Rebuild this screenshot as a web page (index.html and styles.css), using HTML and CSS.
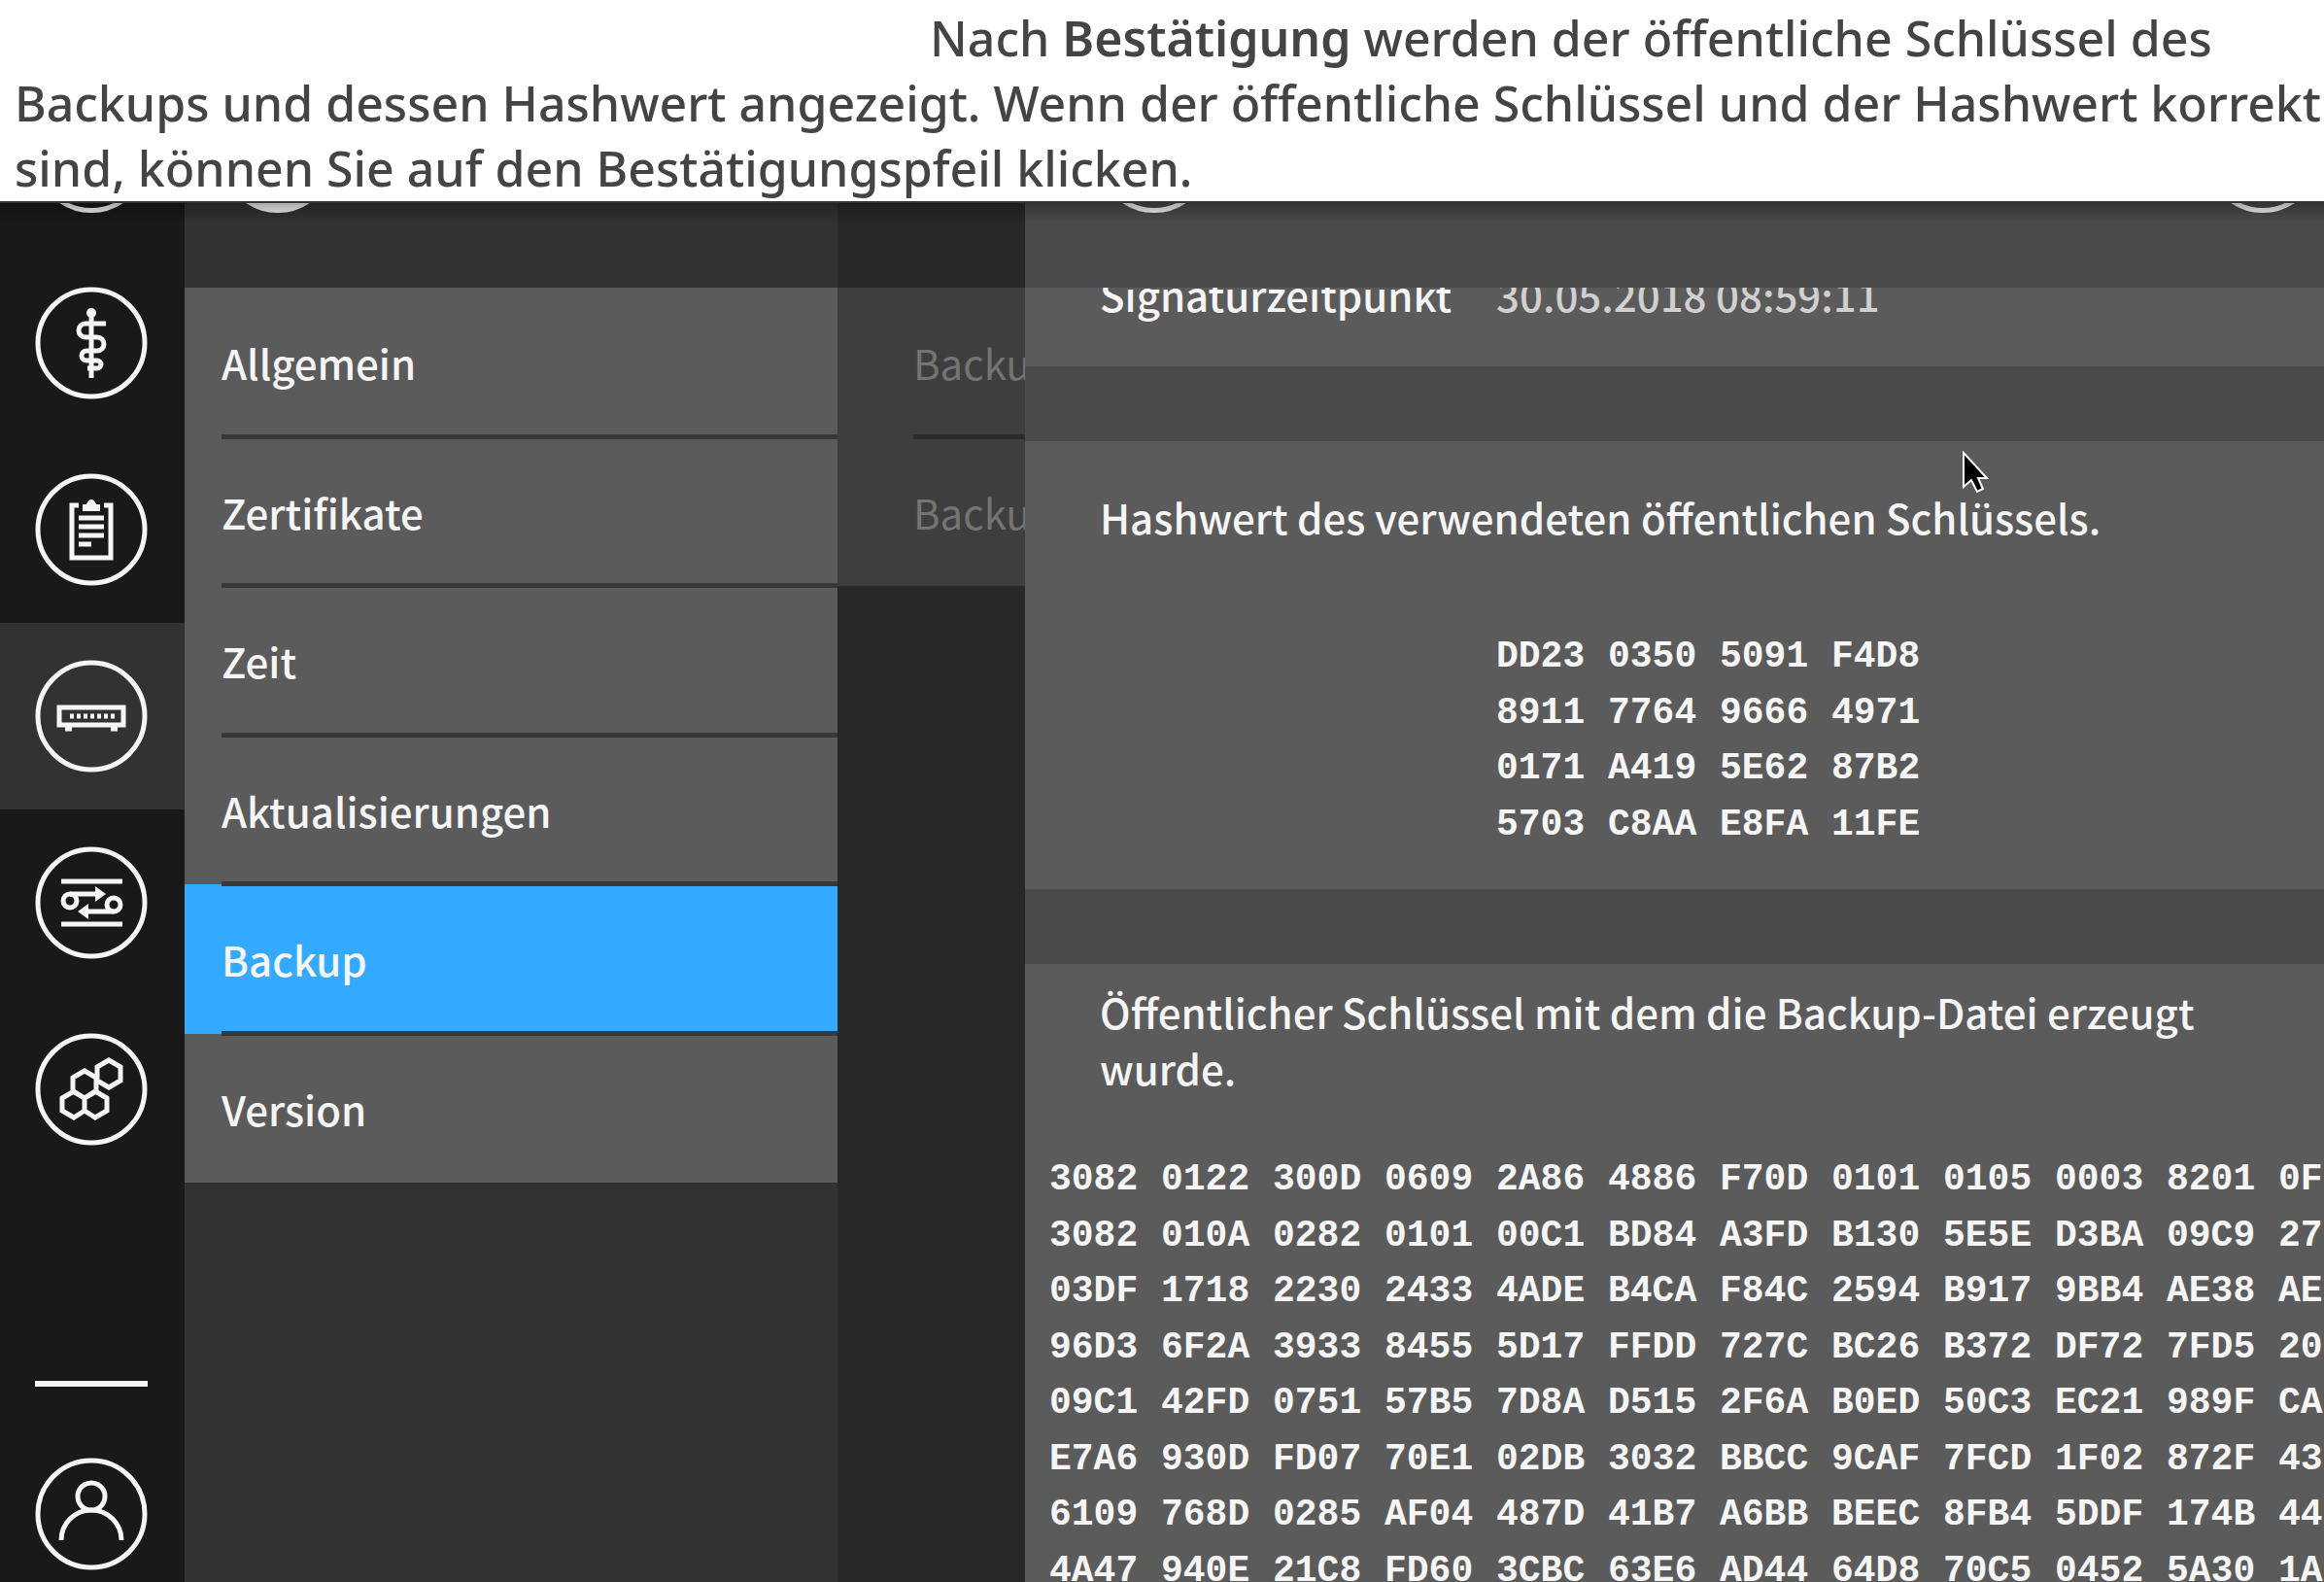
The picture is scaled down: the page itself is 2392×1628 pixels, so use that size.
FILE: index.html
```html
<!DOCTYPE html>
<html lang="de">
<head>
<meta charset="utf-8">
<meta name="viewport" content="width=device-width, initial-scale=1">
<title>Backup</title>
<link rel="stylesheet" href="styles.css">
</head>
<body>
<p class="intro">Nach <strong>Bestätigung</strong> werden der öffentliche Schlüssel des Backups und dessen Hashwert angezeigt. Wenn der öffentliche Schlüssel und der Hashwert korrekt sind, können Sie auf den Bestätigungspfeil klicken.</p>
<div class="app">
  <div class="columns">
    <nav class="rail" aria-label="Hauptmenü">
      <a class="rail-item" href="#start" aria-label="Start"><span class="ring"></span></a>
      <a class="rail-item" href="#praxis" aria-label="Praxis">
        <svg class="icon" viewBox="0 0 116 116"><circle cx="58" cy="58" r="55"/><circle class="solid" cx="58" cy="27" r="5"/><path d="M58 26V94"/><path d="M73 38H52a7 7 0 0 0 0 14H64a7 7 0 0 1 0 14H53a5 5 0 0 0 0 10H64a4 4 0 0 1 0 8H54"/></svg>
      </a>
      <a class="rail-item" href="#protokoll" aria-label="Protokoll">
        <svg class="icon" viewBox="0 0 116 116"><circle cx="58" cy="58" r="55"/><path d="M45 33H38V87H78V33H71"/><path class="solid" d="M49 39V32H53Q55 27 58 27T63 32H67V39Z"/><path d="M45 46H71M45 55H71M45 64H71M45 73H58"/></svg>
      </a>
      <a class="rail-item active" href="#konnektor" aria-label="Konnektor" aria-current="page">
        <svg class="icon" viewBox="0 0 116 116"><circle cx="58" cy="58" r="55"/><path d="M25 49H91V67H25Z"/><path class="dots" d="M36 58H82"/><path d="M31 71H38M78 71H85"/></svg>
      </a>
      <a class="rail-item" href="#netzwerk" aria-label="Netzwerk">
        <svg class="icon" viewBox="0 0 116 116"><circle cx="58" cy="58" r="55"/><path d="M27 36H90M27 80H90"/><circle cx="36" cy="56" r="7"/><circle cx="81" cy="60" r="7"/><path d="M36 49H64M81 67H54"/><path class="solid" d="M62 41L73 49L62 57ZM55 59L44 67L55 75Z"/></svg>
      </a>
      <a class="rail-item" href="#module" aria-label="Module">
        <svg class="icon" viewBox="0 0 116 116"><circle cx="58" cy="58" r="55"/><path d="M76 28L88 35V49L76 56L64 49V35ZM51 39L63 46V60L51 67L39 60V46ZM40 60L51 67V80L40 87L28 80V67ZM62 60L74 67V80L62 87L51 80V67Z"/></svg>
      </a>
      <hr class="rail-rule">
      <a class="rail-item" href="#benutzer" aria-label="Benutzer">
        <svg class="icon" viewBox="0 0 116 116"><circle cx="58" cy="58" r="55"/><circle cx="58" cy="40" r="14"/><path d="M27 85A31 31 0 0 1 89 85"/></svg>
      </a>
    </nav>
    <section class="menu">
      <header class="bar"><span class="ring filled"></span></header>
      <ul class="list">
        <li><a href="#allgemein">Allgemein</a></li>
        <li><a href="#zertifikate">Zertifikate</a></li>
        <li><a href="#zeit">Zeit</a></li>
        <li><a href="#aktualisierungen">Aktualisierungen</a></li>
        <li class="selected"><a href="#backup">Backup</a></li>
        <li><a href="#version">Version</a></li>
      </ul>
    </section>
    <section class="menu submenu">
      <header class="bar"></header>
      <ul class="list">
        <li><a href="#export">Backu</a></li>
        <li><a href="#import">Backu</a></li>
      </ul>
    </section>
    <main class="detail">
      <header class="bar"><button class="ring" aria-label="Zurück"></button><button class="ring" aria-label="Bestätigen"></button></header>
      <dl class="card signature"><dt>Signaturzeitpunkt</dt><dd>30.05.2018 08:59:11</dd></dl>
      <section class="card hash">
        <h2>Hashwert des verwendeten öffentlichen Schlüssels.</h2>
        <div class="hex">
          <div><span>DD23</span><span>0350</span><span>5091</span><span>F4D8</span></div>
          <div><span>8911</span><span>7764</span><span>9666</span><span>4971</span></div>
          <div><span>0171</span><span>A419</span><span>5E62</span><span>87B2</span></div>
          <div><span>5703</span><span>C8AA</span><span>E8FA</span><span>11FE</span></div>
        </div>
        <svg class="cursor" viewBox="0 0 28 44"><path d="M2 2V37L10 30L16 42L22 39L17 28H26Z"/></svg>
      </section>
      <section class="card key">
        <h2>Öffentlicher Schlüssel mit dem die Backup-Datei erzeugt wurde.</h2>
        <div class="hex">
          <div><span>3082</span><span>0122</span><span>300D</span><span>0609</span><span>2A86</span><span>4886</span><span>F70D</span><span>0101</span><span>0105</span><span>0003</span><span>8201</span><span>0F</span></div>
          <div><span>3082</span><span>010A</span><span>0282</span><span>0101</span><span>00C1</span><span>BD84</span><span>A3FD</span><span>B130</span><span>5E5E</span><span>D3BA</span><span>09C9</span><span>27</span></div>
          <div><span>03DF</span><span>1718</span><span>2230</span><span>2433</span><span>4ADE</span><span>B4CA</span><span>F84C</span><span>2594</span><span>B917</span><span>9BB4</span><span>AE38</span><span>AE</span></div>
          <div><span>96D3</span><span>6F2A</span><span>3933</span><span>8455</span><span>5D17</span><span>FFDD</span><span>727C</span><span>BC26</span><span>B372</span><span>DF72</span><span>7FD5</span><span>20</span></div>
          <div><span>09C1</span><span>42FD</span><span>0751</span><span>57B5</span><span>7D8A</span><span>D515</span><span>2F6A</span><span>B0ED</span><span>50C3</span><span>EC21</span><span>989F</span><span>CA</span></div>
          <div><span>E7A6</span><span>930D</span><span>FD07</span><span>70E1</span><span>02DB</span><span>3032</span><span>BBCC</span><span>9CAF</span><span>7FCD</span><span>1F02</span><span>872F</span><span>43</span></div>
          <div><span>6109</span><span>768D</span><span>0285</span><span>AF04</span><span>487D</span><span>41B7</span><span>A6BB</span><span>BEEC</span><span>8FB4</span><span>5DDF</span><span>174B</span><span>44</span></div>
          <div><span>4A47</span><span>940E</span><span>21C8</span><span>FD60</span><span>3CBC</span><span>63E6</span><span>AD44</span><span>64D8</span><span>70C5</span><span>0452</span><span>5A30</span><span>1A</span></div>
        </div>
      </section>
    </main>
  </div>
</div>
</body>
</html>
```
FILE: styles.css
```css
* { box-sizing: border-box; margin: 0; padding: 0; }

body {
  display: flex;
  flex-direction: column;
  height: 100vh;
  overflow: hidden;
  background: #fff;
  font-family: "Noto Sans CJK SC", "Noto Sans", sans-serif;
  font-size: 42px;
  font-weight: 500;
  color: #f5f5f5;
}

.intro {
  padding: 6px 0 0 15px;
  font: 500 50px/67px "Noto Sans", sans-serif;
  color: #444;
  text-indent: 942px;
}
.intro strong { font-weight: 600; }

.app {
  position: relative;
  flex: 1;
  min-height: 0;
  overflow: hidden;
  border-top: 2px solid #333;
}

/* shadow cast on the clipped top edge of the scrolled columns */
.app::after {
  content: "";
  position: absolute;
  inset: 0 0 auto;
  height: 20px;
  background: linear-gradient(rgba(0, 0, 0, .3), rgba(0, 0, 0, 0));
}

.columns {
  display: grid;
  grid-template-columns: 190px 672px 193px minmax(0, 1fr);
  height: calc(100% + 144px);
  margin-top: -144px;
}

.rail { background: #191919; }
.rail-item { display: flex; align-items: center; height: 192px; padding-left: 36px; }
.rail-item.active { background: #323232; }
.rail-rule { width: 116px; height: 6px; margin: 204px 0 35px 36px; border: 0; background: #f5f5f5; }

.icon { width: 116px; height: 116px; fill: none; stroke: #f5f5f5; stroke-width: 5; }
.icon .solid { fill: #f5f5f5; stroke: none; }
.icon .dots { stroke-dasharray: 4 3; }

.ring { display: block; width: 116px; height: 116px; border: 5px solid #f5f5f5; border-radius: 50%; background: none; }
.ring.filled { background: #f5f5f5; }

.bar { display: flex; justify-content: space-between; align-items: flex-start; height: 231px; padding: 38px; }

.menu { min-width: 0; overflow: hidden; background: #323232; }
.list { display: grid; grid-auto-rows: 154px 153px; list-style: none; background: #5b5b5b; }
.list li { position: relative; display: flex; align-items: center; padding-left: 38px; }
.list a { color: inherit; text-decoration: none; line-height: 58px; }
.list li:not(:last-child)::after { content: ""; position: absolute; z-index: 1; left: 38px; right: 0; bottom: -2px; height: 5px; background: #383838; }
.list .selected { background: #33aaff; }

.submenu { background: #282828; color: #747474; font-weight: 400; }
.submenu .list { background: #3e3e3e; }
.submenu .list li { padding-left: 78px; }
.submenu .list li:not(:last-child)::after { left: 78px; background: #2b2b2b; }

.detail { display: flex; flex-direction: column; gap: 77px; min-width: 0; background: #4b4b4b; }
.detail .bar { padding: 38px 5px 38px 75px; margin-bottom: -77px; }
.card { background: #5b5b5b; }
.card h2 { font-size: 42px; font-weight: 500; line-height: 58px; }

.signature { display: flex; align-items: flex-end; height: 81px; padding: 0 77px 45px; line-height: 58px; overflow: hidden; }
.signature dt { width: 408px; }
.signature dd { color: #d0d0d0; }

.hash { position: relative; height: 461px; padding: 49px 77px; }
.hash .hex { margin: 86px 0 0 408px; }
.key { flex: 1; padding: 20px 0 0 25px; overflow: hidden; }
.key h2 { padding: 0 77px 0 52px; }
.key .hex { margin-top: 57px; }

.hex { display: grid; grid-auto-rows: 58px 57px; font: bold 38px/58px "Liberation Mono", monospace; }
.hex div { display: flex; }
.hex span { flex: none; width: 115px; }

.cursor { position: absolute; left: 964px; top: 10px; width: 28px; height: 44px; fill: #000; stroke: #fff; stroke-width: 2; }
```
